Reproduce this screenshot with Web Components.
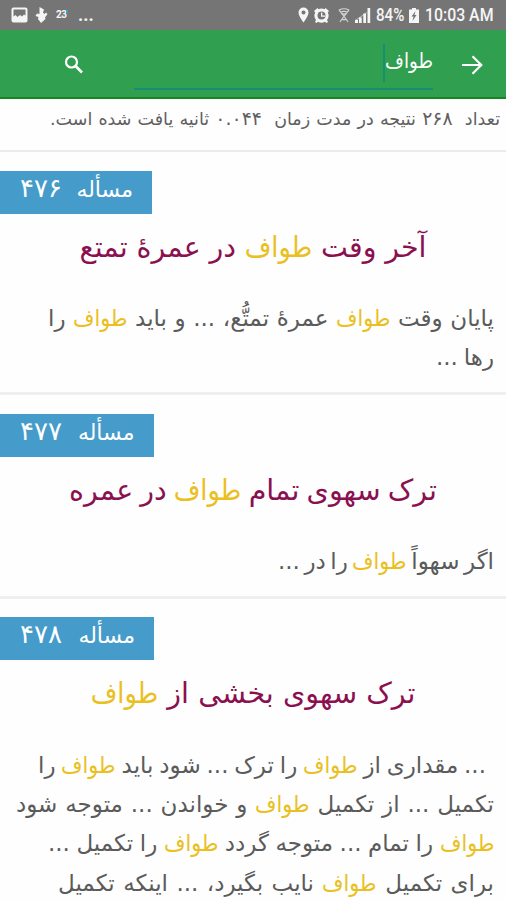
<!DOCTYPE html>
<html lang="fa">
<head>
<meta charset="utf-8">
<title>جستجو</title>
<style>
  body {
    margin: 0;
    height: 900px;
    overflow: hidden;
    background: #fefefe;
    font-family: "DejaVu Sans", sans-serif;
  }
</style>
</head>
<body>
<search-screen>
  <status-bar slot="status" battery="84%" time="10:03 AM"></status-bar>
  <search-bar slot="bar">طواف</search-bar>
  <text-line slot="summary" style="--width: 450px; --size: 17.5px">تعداد &nbsp;<i>۲۶۸</i> نتیجه در مدت زمان &nbsp;<i>۰.۰۴۴</i> ثانیه یافت شده است.</text-line>

  <result-card style="--badge: 152px">
    <span slot="label">مسأله</span><span slot="number">۴۷۶</span>
    <text-line slot="title" style="--width: 347px">آخر وقت <b>طواف</b> در عمرهٔ تمتع</text-line>
    <text-line style="--width: 446px">پایان وقت <b>طواف</b> عمرهٔ تمتُّع، ... و باید <b>طواف</b> را</text-line>
    <text-line style="--width: 58px">رها ...</text-line>
  </result-card>

  <result-card style="--badge: 153.500px">
    <span slot="label">مسأله</span><span slot="number">۴۷۷</span>
    <text-line slot="title" style="--width: 368px">ترک سهوی تمام <b>طواف</b> در عمره</text-line>
    <text-line style="--width: 216px">اگر سهواً <b>طواف</b> را در ...</text-line>
  </result-card>

  <result-card style="--badge: 154px">
    <span slot="label">مسأله</span><span slot="number">۴۷۸</span>
    <text-line slot="title" style="--width: 325px">ترک سهوی بخشی از <b>طواف</b></text-line>
    <text-line style="--width: 448px; --indent: 8px">... مقداری از <b>طواف</b> را ترک ... شود باید <b>طواف</b> را</text-line>
    <text-line style="--width: 478px">تکمیل ... از تکمیل <b>طواف</b> و خواندن ... متوجه شود</text-line>
    <text-line style="--width: 446px"><b>طواف</b> را تمام ... متوجه گردد <b>طواف</b> را تکمیل ...</text-line>
    <text-line style="--width: 436px">برای تکمیل <b>طواف</b> نایب بگیرد، ... اینکه تکمیل</text-line>
  </result-card>
</search-screen>

<script>
  // Attach an open shadow root with the given styles and markup
  const render = (el, css, html) => {
    el.attachShadow({mode: 'open'}).innerHTML = `<style>${css}</style>${html}`;
  };

  class SearchScreen extends HTMLElement {
    constructor() {
      super();
      render(this, `
        :host {
          display: block;
          direction: rtl;
        }

        .summary {
          box-sizing: border-box;
          height: 53px;
          padding: 1px 6px 0;
          color: #606060;
          border-bottom: 2px solid #ececec;
        }
      `, `
        <slot name="status"></slot>
        <slot name="bar"></slot>
        <div class="summary"><slot name="summary"></slot></div>
        <main><slot></slot></main>
      `);
    }
  }

  class StatusBar extends HTMLElement {
    constructor() {
      super();
      render(this, `
        :host {
          display: flex;
          direction: ltr;
          box-sizing: border-box;
          height: 30px;
          padding: 0 12px 0 11px;
          align-items: center;
          justify-content: space-between;
          background: #757575;
          color: #f5f5f5;
          font: 500 18px/30px Roboto, sans-serif;
        }

        .group {
          display: flex;
          align-items: center;
        }

        svg {
          display: block;
          fill: #f5f5f5;
        }

        .day {
          position: relative;
          width: 13px;
          margin: 0 9px 0 8px;
          font-size: 10px;
          font-weight: 700;
          letter-spacing: -0.5px;
        }

        .day::after {
          content: "";
          position: absolute;
          top: 10px;
          right: 1px;
          width: 2px;
          height: 3px;
          background: #2aa5df;
        }

        .dots {
          font-weight: 700;
        }

        .text {
          display: inline-block;
          transform-origin: left;
          white-space: nowrap;
        }
      `, `
        <div class="group">
          <svg width="17" height="16" viewBox="0 0 17 16"><path fill-rule="evenodd" d="M2.500 .5h12a2 2 0 0 1 2 2v11a2 2 0 0 1-2 2h-12a2 2 0 0 1-2-2v-11a2 2 0 0 1 2-2zM2.500 2.500v7l2-1.500 2 2 2.500-2 2 1.500 2-2 1.500 1V2.500z"/></svg>
          <svg style="margin-left:7px" width="13" height="16" viewBox="0 0 13 16"><path d="M4.500 0l4.500 2.500-1 3 1.500 1.500L11 5.500 12.500 7 10 10.500l.5 1.500-4.500 4-3-4 .5-2L.5 9 2 6.500l2.500.5z"/></svg>
          <span class="day">23</span>
          <span class="dots">...</span>
        </div>
        <div class="group">
          <svg width="11" height="16" viewBox="0 0 11 16"><path fill-rule="evenodd" d="M5.500 .5a5 5 0 0 1 5 5C10.500 9 5.500 15.500 5.500 15.500S.5 9 .5 5.500a5 5 0 0 1 5-5zm0 3a2 2 0 1 0 0 4 2 2 0 0 0 0-4z"/></svg>
          <svg style="margin-left:5px" width="15" height="15" viewBox="0 0 15 15"><path fill-rule="evenodd" d="M3.500 0l1 1.200a7 7 0 0 1 6 0l1-1.200L15 3l-1.200 1.500a7 7 0 0 1-.8 7.500l1 2-1.500 1-1.500-1.300a7 7 0 0 1-7 0L2.500 15 1 14l1-2a7 7 0 0 1-.8-7.500L0 3zm4 3.500a4 4 0 1 0 0 8 4 4 0 0 0 0-8z"/><path d="M7 4.500h1.300v3H11v1.200H7z"/></svg>
          <svg style="margin-left:9px;opacity:.75" width="12" height="15" viewBox="0 0 13 16"><path fill="none" stroke="#f5f5f5" stroke-width="1.200" d="M1 2q5.500-2.500 11 0M2.500 4.500q4-2 8 0M4 7q2.500-1.500 5 0M1 2l5.500 7L12 2M6.500 9L2 15M6.500 9l4.500 6M4 12.500h5"/></svg>
          <svg style="margin-left:5px" width="16" height="15" viewBox="0 0 16 15"><path d="M0 15v-3h3v3zM4 15V9.500h2.700V15zM8.300 15V5.500H11V15zM12.500 15V0h2.700v15z"/><path opacity=".55" d="M0 12L12 4v1L2 12z"/></svg>
          <span class="text" id="battery" style="margin-left:5px;width:30px;transform:scaleX(.84)"></span>
          <svg style="margin-left:3px" width="10" height="15" viewBox="0 0 10 15"><path fill-rule="evenodd" d="M3 0h4v1.500h3V15H0V1.500h3zM6.500 3L2.500 8.500h2L3.500 13l4-6h-2z"/></svg>
          <span class="text" id="time" style="margin-left:6px;width:69px;transform:scaleX(.88)"></span>
        </div>
      `);
      this.shadowRoot.querySelector('#battery').textContent = this.getAttribute('battery');
      this.shadowRoot.querySelector('#time').textContent = this.getAttribute('time');
    }
  }

  class SearchBar extends HTMLElement {
    constructor() {
      super();
      render(this, `
        :host {
          display: flex;
          box-sizing: border-box;
          height: 69px;
          padding: 0 23px 0 64px;
          align-items: flex-start;
          background: #309f50;
          border-bottom: 2px solid #178622;
          color: #fff;
        }

        svg {
          display: block;
          fill: none;
          stroke: #fff;
          stroke-width: 2.200;
        }

        .back {
          margin: 25px 0 0 29px;
        }

        .search {
          margin: 25px 50px 0 0;
        }

        .field {
          display: flex;
          box-sizing: border-box;
          flex: 1;
          height: 60px;
          border-bottom: 2px solid #168e76;
          font-size: 20.500px;
          line-height: 62px;
        }

        .query {
          width: 48px;
          white-space: nowrap;
          transform: scaleX(.89);
          transform-origin: right;
        }

        .caret {
          width: 2px;
          height: 38px;
          margin-top: 14px;
          background: #168e76;
        }
      `, `
        <svg class="back" width="21" height="20" viewBox="0 0 21 20"><path d="M0 10h19M10.500 1.200l8.800 8.800-8.800 8.800"/></svg>
        <div class="field"><span class="query"><slot></slot></span><span class="caret"></span></div>
        <svg class="search" width="20" height="19" viewBox="0 0 20 19"><circle cx="7.500" cy="7" r="5.500"/><path stroke-width="2.600" d="M11.500 11l6.500 6.500"/></svg>
      `);
    }
  }

  // A single line of text spread over a known measure
  class TextLine extends HTMLElement {
    constructor() {
      super();
      render(this, `
        :host {
          display: block;
          width: var(--width);
          margin-right: var(--indent, 0);
          font-size: var(--size, inherit);
          text-align: justify;
          text-align-last: justify;
          word-spacing: -4px;
          line-height: var(--leading, 39.300px);
          height: var(--leading, 39.300px);
        }

        ::slotted(b) {
          display: inline-block;
          margin: 0 -0.130em;
          color: #eac01f;
          font-weight: 400;
          line-height: 1;
          transform: scaleX(.9);
        }

        ::slotted(i) {
          font-size: 1.080em;
          font-style: normal;
          line-height: 1;
        }
      `, `<slot></slot>`);
    }
  }

  class ResultCard extends HTMLElement {
    constructor() {
      super();
      render(this, `
        :host {
          display: block;
          padding: 18.500px 12px 14.500px;
          border-bottom: 3px solid #efefef;
          color: #5b5b5b;
          font-size: 23px;
        }

        .badge {
          display: flex;
          box-sizing: border-box;
          width: var(--badge);
          height: 43px;
          margin: 0 auto 0 -12px;
          padding: 0 19px 0 20px;
          justify-content: space-between;
          background: #459bca;
          color: #fff;
          font-size: 22px;
          line-height: 38px;
        }

        .number {
          font-size: 26px;
          line-height: 35px;
        }

        .title {
          --leading: 67px;
          display: flex;
          height: 85.500px;
          justify-content: center;
          color: #8b1050;
          font-size: 28.500px;
        }
      `, `
        <div class="badge"><slot name="label"></slot><span class="number"><slot name="number"></slot></span></div>
        <div class="title"><slot name="title"></slot></div>
        <slot></slot>
      `);
    }
  }

  customElements.define('search-screen', SearchScreen);
  customElements.define('status-bar', StatusBar);
  customElements.define('search-bar', SearchBar);
  customElements.define('text-line', TextLine);
  customElements.define('result-card', ResultCard);
</script>
</body>
</html>
